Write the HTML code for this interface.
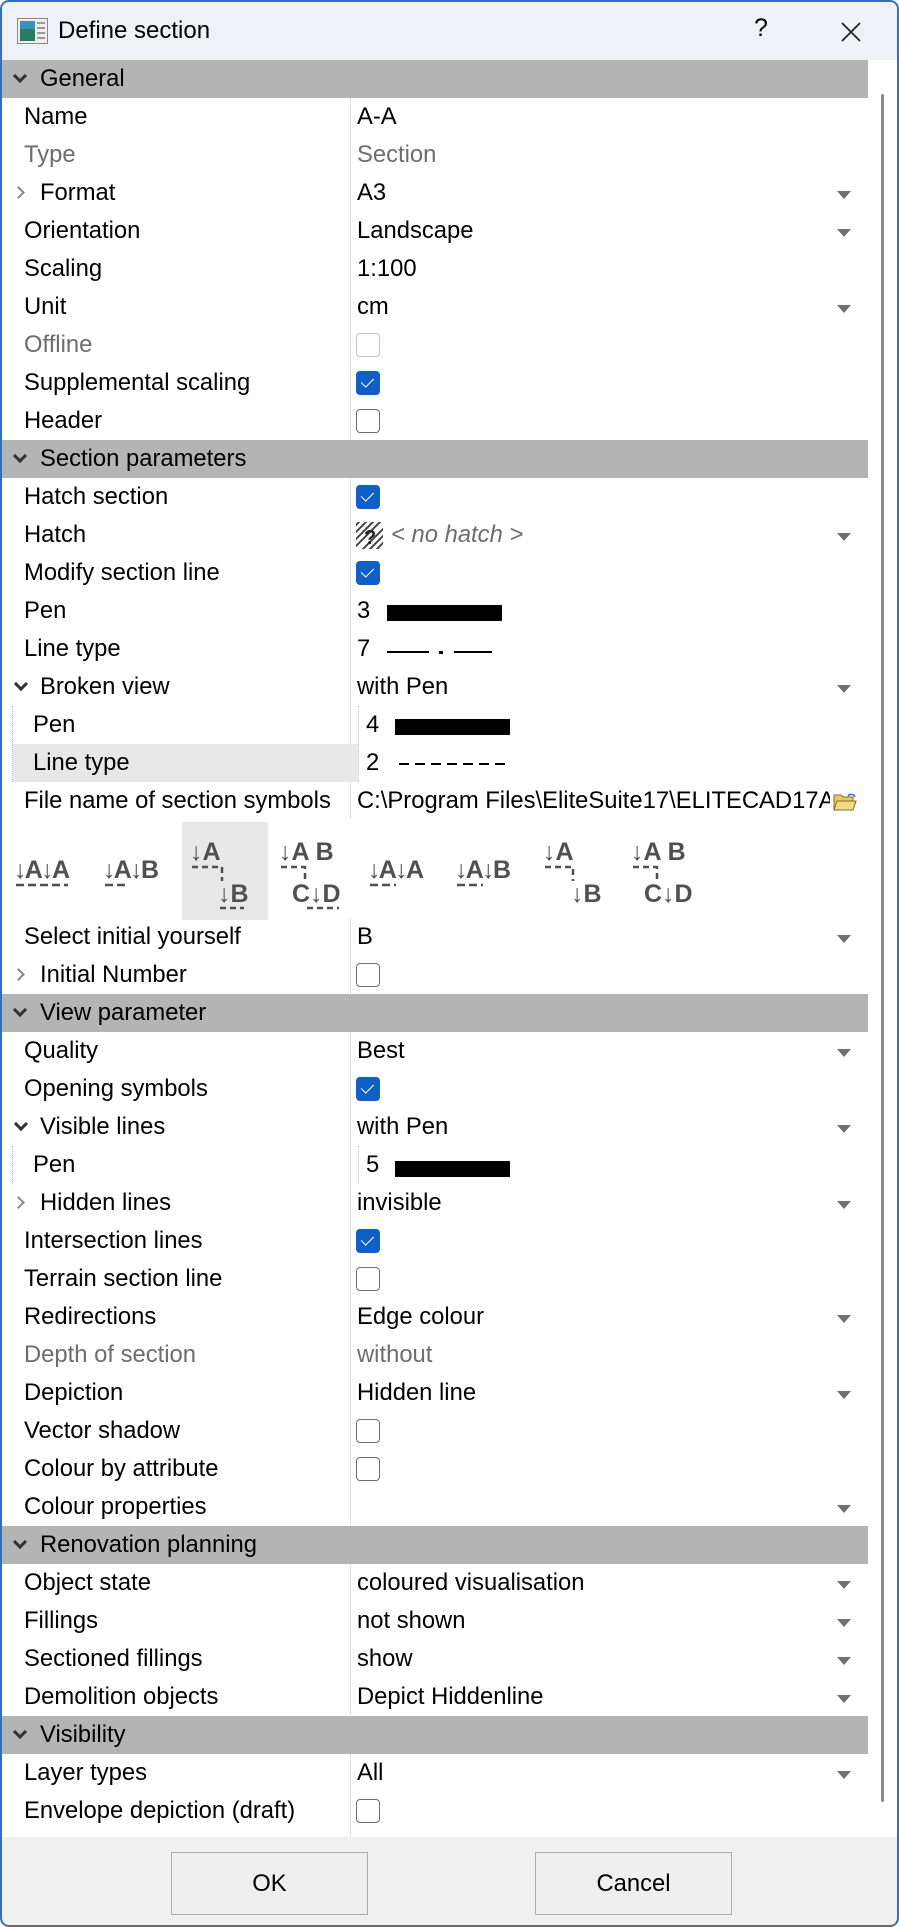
<!DOCTYPE html>
<html><head><meta charset="utf-8"><style>
*{margin:0;padding:0;box-sizing:border-box}
body{width:899px;height:1927px;background:#fff;font-family:"Segoe UI","Liberation Sans",sans-serif;font-size:23.8px;color:#000;overflow:hidden;position:relative}
#win{position:absolute;left:0;top:0;width:899px;height:1927px;border:2px solid #2f6fc9;border-bottom-color:#6a6a6a;border-radius:9px;overflow:hidden;background:#f0f0f0}
#title{position:absolute;left:0;top:0;width:899px;height:58px;background:#eef2f7}
#list{position:absolute;left:0;top:58px;width:866px;height:1777px;background:#fff}
.r{position:relative;height:38px}
.l{position:absolute;left:22px;top:0;line-height:38px;white-space:nowrap}
.v{position:absolute;left:355px;top:0;line-height:38px;white-space:nowrap}
.g{color:#6d6d6d}
.h{background:#b4b4b4;position:relative;height:38px}
.h .l{left:38px}
.chev{position:absolute;left:13px;top:11px;width:10px;height:10px;border-right:3px solid #333;border-bottom:3px solid #333;transform:rotate(45deg)}
.chr{position:absolute;left:12px;top:14px;width:9px;height:9px;border-right:2px solid #888;border-top:2px solid #888;transform:rotate(45deg)}
.chd{position:absolute;left:14px;top:11px;width:10px;height:10px;border-right:3px solid #333;border-bottom:3px solid #333;transform:rotate(45deg)}
.dd{position:absolute;left:835px;top:17px;width:0;height:0;border-left:7px solid transparent;border-right:7px solid transparent;border-top:8px solid #707070}
.cb{position:absolute;left:354px;top:7px;width:24px;height:24px;border-radius:4px}
.on{background:#0f5fc5}
.on::after{content:"";position:absolute;left:8px;top:4px;width:6px;height:11px;border-right:1.8px solid #fff;border-bottom:1.8px solid #fff;transform:rotate(45deg)}
.off{border:1.5px solid #6e6e6e;background:#fff}
.dis{border:1.5px solid #c4c4c4;background:#fff}
.bar{position:absolute;height:16px;background:#000}
#div{position:absolute;left:348px;top:96px;width:0;height:1739px;border-left:1px dotted #c8c8c8}
.sub .l{left:31px}
.sub::before{content:"";position:absolute;left:10px;top:0;height:38px;border-left:1px dotted #bbb}
.sub::after{content:"";position:absolute;left:356px;top:0;height:38px;border-left:1px dotted #c8c8c8;background:#fff}
.sub .subbg{position:absolute;left:11px;top:0;width:345px;height:38px}
.btn{position:absolute;top:1850px;width:197px;height:63px;border:1px solid #adadad;background:#efefef;text-align:center;line-height:61px;font-size:23.8px}
</style></head><body>
<div id="win">
<div id="title">
 <svg style="position:absolute;left:15px;top:16px" width="31" height="26" viewBox="0 0 31 26"><rect x="0.5" y="0.5" width="30" height="25" fill="#eee" stroke="#888"/><rect x="3" y="3" width="15" height="20" fill="#2d7a63"/><rect x="3" y="3" width="15" height="8" fill="#3d8fc0"/><rect x="20" y="4" width="8" height="2" fill="#999"/><rect x="20" y="9" width="8" height="2" fill="#999"/><rect x="20" y="14" width="8" height="2" fill="#999"/><rect x="20" y="19" width="8" height="2" fill="#999"/></svg>
 <div style="position:absolute;left:56px;top:15px;font-size:24px">Define section</div>
 <div style="position:absolute;left:752px;top:12px;font-size:25px">?</div>
 <svg style="position:absolute;left:838px;top:19px" width="22" height="22"><path d="M2 2L20 20M20 2L2 20" stroke="#222" stroke-width="1.8"/></svg>
</div>
<div id="list">
<div id="div" style="top:38px"></div>
<div class="h"><div class="chev"></div><div class="l">General</div></div>
<div class="r"><div class="l">Name</div><div class="v">A-A</div></div>
<div class="r"><div class="l g">Type</div><div class="v g">Section</div></div>
<div class="r"><div class="chr"></div><div class="l" style="left:38px">Format</div><div class="v">A3</div><div class="dd"></div></div>
<div class="r"><div class="l">Orientation</div><div class="v">Landscape</div><div class="dd"></div></div>
<div class="r"><div class="l">Scaling</div><div class="v">1:100</div></div>
<div class="r"><div class="l">Unit</div><div class="v">cm</div><div class="dd"></div></div>
<div class="r"><div class="l g">Offline</div><div class="cb dis"></div></div>
<div class="r"><div class="l">Supplemental scaling</div><div class="cb on"></div></div>
<div class="r"><div class="l">Header</div><div class="cb off"></div></div>
<div class="h"><div class="chev"></div><div class="l">Section parameters</div></div>
<div class="r"><div class="l">Hatch section</div><div class="cb on"></div></div>
<div class="r"><div class="l">Hatch</div>
 <svg style="position:absolute;left:354px;top:6px" width="27" height="27" viewBox="0 0 27 27"><rect width="27" height="27" fill="#fff"/><g stroke="#444" stroke-width="2"><path d="M-3 6L6 -3M-3 13L13 -3M-3 20L20 -3M-3 27L27 -3M4 30L30 4M11 30L30 11M18 30L30 18M25 30L30 25"/></g><text x="8" y="22" font-size="20" font-weight="bold" fill="#222" font-family="Liberation Sans">?</text></svg>
 <div class="v g" style="left:389px;font-style:italic">&lt; no hatch &gt;</div><div class="dd"></div></div>
<div class="r"><div class="l">Modify section line</div><div class="cb on"></div></div>
<div class="r"><div class="l">Pen</div><div class="v">3</div><div class="bar" style="left:385px;top:13px;width:115px"></div></div>
<div class="r"><div class="l">Line type</div><div class="v">7</div><div class="bar" style="left:385px;top:21px;width:42px;height:2px"></div><div class="bar" style="left:437px;top:21px;width:4px;height:3px"></div><div class="bar" style="left:452px;top:21px;width:38px;height:2px"></div></div>
<div class="r"><div class="chd"></div><div class="l" style="left:38px">Broken view</div><div class="v">with Pen</div><div class="dd"></div></div>
<div class="r sub"><div class="l">Pen</div><div class="v" style="left:364px">4</div><div class="bar" style="left:393px;top:13px;width:115px"></div></div>
<div class="r sub"><div class="subbg" style="background:#e8e8e8"></div><div class="l">Line type</div><div class="v" style="left:364px">2</div><svg style="position:absolute;left:397px;top:18px" width="112" height="4"><line x1="0" y1="2" x2="112" y2="2" stroke="#000" stroke-width="2" stroke-dasharray="10 6"/></svg></div>
<div class="r"><div class="l">File name of section symbols</div><div class="v">C:\Program Files\EliteSuite17\ELITECAD17AF</div>
 <div style="position:absolute;left:828px;top:0;width:38px;height:38px;background:#fff"></div>
 <svg style="position:absolute;left:831px;top:10px" width="24" height="20" viewBox="0 0 24 20"><path d="M1 3h7l2 2h10v13H1z" fill="#e8c86a" stroke="#8a6a20"/><path d="M4 9h19l-3 9H1z" fill="#f3d98a" stroke="#8a6a20"/><path d="M15 4a4 4 0 0 1 7 1" stroke="#2a6fd0" fill="none" stroke-width="1.5"/></svg></div>
<div style="position:relative;height:98px;background:#fff">
 <div style="position:absolute;left:180px;top:2px;width:86px;height:98px;background:#e8e8e8"></div>
 <svg width="866" height="98" style="position:absolute;left:0;top:0" font-family="Liberation Sans Narrow,Liberation Sans" font-weight="bold" font-size="25" fill="#505050">
  <g><text x="12" y="58" textLength="56">↓A↓A</text><path d="M14 65h52" stroke="#505050" stroke-width="2.5" stroke-dasharray="8 4"/></g>
  <g><text x="101" y="58" textLength="56">↓A↓B</text><path d="M103 65h24" stroke="#505050" stroke-width="2.5" stroke-dasharray="8 4"/></g>
  <g><text x="188" y="40">↓A</text><path d="M190 47h30v14" stroke="#505050" stroke-width="2.5" fill="none" stroke-dasharray="6 4"/><text x="216" y="82">↓B</text><path d="M218 88h24" stroke="#505050" stroke-width="2.5" stroke-dasharray="6 4"/></g>
  <g><text x="277" y="40">↓A B</text><path d="M279 47h24v16" stroke="#505050" stroke-width="2.5" fill="none" stroke-dasharray="6 4"/><text x="290" y="82">C↓D</text><path d="M305 88h32" stroke="#505050" stroke-width="2.5" stroke-dasharray="6 4"/></g>
  <g><text x="366" y="58" textLength="56">↓A↓A</text><path d="M368 65h26" stroke="#505050" stroke-width="2.5" stroke-dasharray="8 4"/></g>
  <g><text x="453" y="58" textLength="56">↓A↓B</text><path d="M455 65h26" stroke="#505050" stroke-width="2.5" stroke-dasharray="8 4"/></g>
  <g><text x="541" y="40">↓A</text><path d="M543 47h28v14" stroke="#505050" stroke-width="2.5" fill="none" stroke-dasharray="6 4"/><text x="569" y="82">↓B</text></g>
  <g><text x="629" y="40">↓A B</text><path d="M631 47h24v16" stroke="#505050" stroke-width="2.5" fill="none" stroke-dasharray="6 4"/><text x="642" y="82">C↓D</text></g>
 </svg>
</div>
<div class="r"><div class="l">Select initial yourself</div><div class="v">B</div><div class="dd"></div></div>
<div class="r"><div class="chr"></div><div class="l" style="left:38px">Initial Number</div><div class="cb off"></div></div>
<div class="h"><div class="chev"></div><div class="l">View parameter</div></div>
<div class="r"><div class="l">Quality</div><div class="v">Best</div><div class="dd"></div></div>
<div class="r"><div class="l">Opening symbols</div><div class="cb on"></div></div>
<div class="r"><div class="chd"></div><div class="l" style="left:38px">Visible lines</div><div class="v">with Pen</div><div class="dd"></div></div>
<div class="r sub"><div class="l">Pen</div><div class="v" style="left:364px">5</div><div class="bar" style="left:393px;top:15px;width:115px"></div></div>
<div class="r"><div class="chr"></div><div class="l" style="left:38px">Hidden lines</div><div class="v">invisible</div><div class="dd"></div></div>
<div class="r"><div class="l">Intersection lines</div><div class="cb on"></div></div>
<div class="r"><div class="l">Terrain section line</div><div class="cb off"></div></div>
<div class="r"><div class="l">Redirections</div><div class="v">Edge colour</div><div class="dd"></div></div>
<div class="r"><div class="l g">Depth of section</div><div class="v g">without</div></div>
<div class="r"><div class="l">Depiction</div><div class="v">Hidden line</div><div class="dd"></div></div>
<div class="r"><div class="l">Vector shadow</div><div class="cb off"></div></div>
<div class="r"><div class="l">Colour by attribute</div><div class="cb off"></div></div>
<div class="r"><div class="l">Colour properties</div><div class="dd"></div></div>
<div class="h"><div class="chev"></div><div class="l">Renovation planning</div></div>
<div class="r"><div class="l">Object state</div><div class="v">coloured visualisation</div><div class="dd"></div></div>
<div class="r"><div class="l">Fillings</div><div class="v">not shown</div><div class="dd"></div></div>
<div class="r"><div class="l">Sectioned fillings</div><div class="v">show</div><div class="dd"></div></div>
<div class="r"><div class="l">Demolition objects</div><div class="v">Depict Hiddenline</div><div class="dd"></div></div>
<div class="h"><div class="chev"></div><div class="l">Visibility</div></div>
<div class="r"><div class="l">Layer types</div><div class="v">All</div><div class="dd"></div></div>
<div class="r"><div class="l">Envelope depiction (draft)</div><div class="cb off"></div></div>
</div>
<div style="position:absolute;left:866px;top:58px;width:31px;height:1777px;background:#fff"></div>
<div style="position:absolute;left:879px;top:92px;width:3px;height:1708px;background:#8a8a8a;border-radius:2px"></div>
<div class="btn" style="left:169px">OK</div>
<div class="btn" style="left:533px">Cancel</div>
</div>
</body></html>
